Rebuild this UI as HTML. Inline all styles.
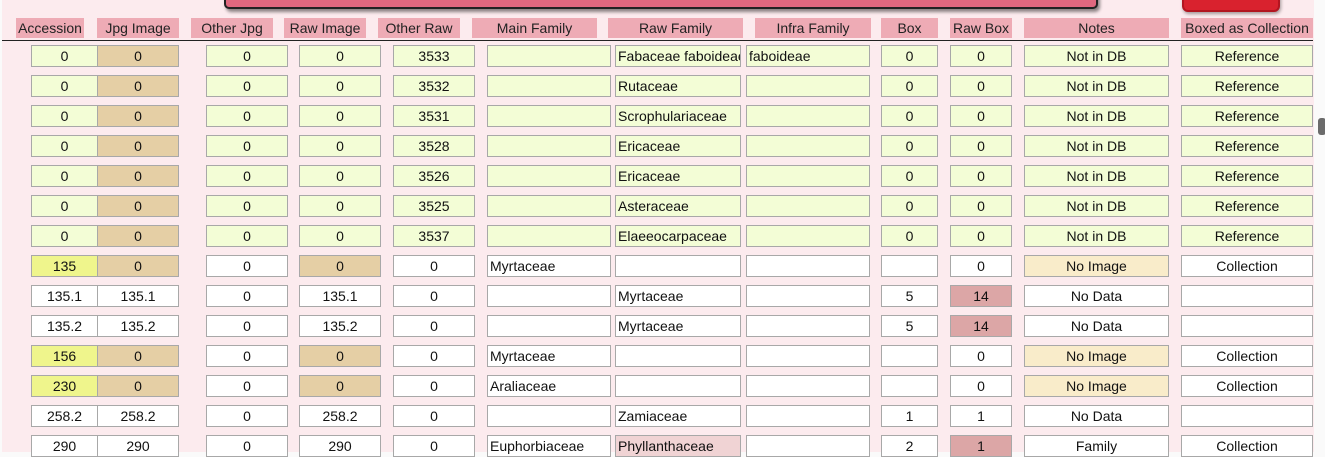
<!DOCTYPE html>
<html><head><meta charset="utf-8"><style>
html,body{margin:0;padding:0;}
body{width:1325px;height:452px;overflow:hidden;background:#fafafa;position:relative;font-family:"Liberation Sans",Arial,sans-serif;font-size:14px;color:#111;}
#bg{position:absolute;left:2px;top:0;width:1312px;height:452px;background:#fcebee;}
.h{position:absolute;top:18px;height:20px;line-height:20px;background:#eeabb5;text-align:center;font-size:14px;color:#222;white-space:nowrap;overflow:hidden;}
.c{position:absolute;height:20px;line-height:20px;border:1px solid #a8a8a8;text-align:center;background:#fff;white-space:nowrap;overflow:hidden;box-sizing:content-box;}
.l{text-align:left;padding-left:2px;}
.g{background:#f3fdd6;}.t{background:#e5cfa5;}.y{background:#eff58c;}.n{background:#f9ecca;}.p{background:#dca6a6;}.q{background:#f0d3d4;}
</style></head><body>
<div id="bg"></div>
<div style="position:absolute;left:224px;top:-12px;width:870px;height:17px;background:#e0687f;border:2px solid #222;border-radius:5px;box-shadow:2px 3px 3px rgba(0,0,0,.45);"></div>
<div style="position:absolute;left:1182px;top:-10px;width:94px;height:18px;background:#d9222e;border:2px solid #b21520;border-radius:6px;box-shadow:1px 2px 3px rgba(0,0,0,.35);"></div>
<div style="position:absolute;left:1318px;top:118px;width:8px;height:17px;background:#6b6b6b;border-radius:3px;"></div>
<div class="h" style="left:16px;width:68px">Accession</div>
<div class="h" style="left:97px;width:82px">Jpg Image</div>
<div class="h" style="left:191px;width:82px">Other Jpg</div>
<div class="h" style="left:284px;width:82px">Raw Image</div>
<div class="h" style="left:378px;width:82px">Other Raw</div>
<div class="h" style="left:472px;width:125px">Main Family</div>
<div class="h" style="left:608px;width:135px">Raw Family</div>
<div class="h" style="left:755px;width:116px">Infra Family</div>
<div class="h" style="left:881px;width:57px">Box</div>
<div class="h" style="left:950px;width:62px">Raw Box</div>
<div class="h" style="left:1024px;width:145px">Notes</div>
<div class="h" style="left:1181px;width:132px">Boxed as Collection</div>
<div style="position:absolute;left:2px;top:40px;width:1311px;height:1px;background:#222"></div>

<div style="position:absolute;left:0;top:45px">
<div class="c g" style="left:31px;width:65px">0</div><div class="c t" style="left:97px;width:80px">0</div><div class="c g" style="left:206px;width:80px">0</div><div class="c g" style="left:299px;width:80px">0</div><div class="c g" style="left:393px;width:80px">3533</div><div class="c g l" style="left:487px;width:120px"></div><div class="c g l" style="left:615px;width:122px">Fabaceae faboideae</div><div class="c g l" style="left:746px;width:120px">faboideae</div><div class="c g" style="left:881px;width:55px">0</div><div class="c g" style="left:950px;width:60px">0</div><div class="c g" style="left:1024px;width:143px">Not in DB</div><div class="c g" style="left:1181px;width:130px">Reference</div>
</div>
<div style="position:absolute;left:0;top:75px">
<div class="c g" style="left:31px;width:65px">0</div><div class="c t" style="left:97px;width:80px">0</div><div class="c g" style="left:206px;width:80px">0</div><div class="c g" style="left:299px;width:80px">0</div><div class="c g" style="left:393px;width:80px">3532</div><div class="c g l" style="left:487px;width:120px"></div><div class="c g l" style="left:615px;width:122px">Rutaceae</div><div class="c g l" style="left:746px;width:120px"></div><div class="c g" style="left:881px;width:55px">0</div><div class="c g" style="left:950px;width:60px">0</div><div class="c g" style="left:1024px;width:143px">Not in DB</div><div class="c g" style="left:1181px;width:130px">Reference</div>
</div>
<div style="position:absolute;left:0;top:105px">
<div class="c g" style="left:31px;width:65px">0</div><div class="c t" style="left:97px;width:80px">0</div><div class="c g" style="left:206px;width:80px">0</div><div class="c g" style="left:299px;width:80px">0</div><div class="c g" style="left:393px;width:80px">3531</div><div class="c g l" style="left:487px;width:120px"></div><div class="c g l" style="left:615px;width:122px">Scrophulariaceae</div><div class="c g l" style="left:746px;width:120px"></div><div class="c g" style="left:881px;width:55px">0</div><div class="c g" style="left:950px;width:60px">0</div><div class="c g" style="left:1024px;width:143px">Not in DB</div><div class="c g" style="left:1181px;width:130px">Reference</div>
</div>
<div style="position:absolute;left:0;top:135px">
<div class="c g" style="left:31px;width:65px">0</div><div class="c t" style="left:97px;width:80px">0</div><div class="c g" style="left:206px;width:80px">0</div><div class="c g" style="left:299px;width:80px">0</div><div class="c g" style="left:393px;width:80px">3528</div><div class="c g l" style="left:487px;width:120px"></div><div class="c g l" style="left:615px;width:122px">Ericaceae</div><div class="c g l" style="left:746px;width:120px"></div><div class="c g" style="left:881px;width:55px">0</div><div class="c g" style="left:950px;width:60px">0</div><div class="c g" style="left:1024px;width:143px">Not in DB</div><div class="c g" style="left:1181px;width:130px">Reference</div>
</div>
<div style="position:absolute;left:0;top:165px">
<div class="c g" style="left:31px;width:65px">0</div><div class="c t" style="left:97px;width:80px">0</div><div class="c g" style="left:206px;width:80px">0</div><div class="c g" style="left:299px;width:80px">0</div><div class="c g" style="left:393px;width:80px">3526</div><div class="c g l" style="left:487px;width:120px"></div><div class="c g l" style="left:615px;width:122px">Ericaceae</div><div class="c g l" style="left:746px;width:120px"></div><div class="c g" style="left:881px;width:55px">0</div><div class="c g" style="left:950px;width:60px">0</div><div class="c g" style="left:1024px;width:143px">Not in DB</div><div class="c g" style="left:1181px;width:130px">Reference</div>
</div>
<div style="position:absolute;left:0;top:195px">
<div class="c g" style="left:31px;width:65px">0</div><div class="c t" style="left:97px;width:80px">0</div><div class="c g" style="left:206px;width:80px">0</div><div class="c g" style="left:299px;width:80px">0</div><div class="c g" style="left:393px;width:80px">3525</div><div class="c g l" style="left:487px;width:120px"></div><div class="c g l" style="left:615px;width:122px">Asteraceae</div><div class="c g l" style="left:746px;width:120px"></div><div class="c g" style="left:881px;width:55px">0</div><div class="c g" style="left:950px;width:60px">0</div><div class="c g" style="left:1024px;width:143px">Not in DB</div><div class="c g" style="left:1181px;width:130px">Reference</div>
</div>
<div style="position:absolute;left:0;top:225px">
<div class="c g" style="left:31px;width:65px">0</div><div class="c t" style="left:97px;width:80px">0</div><div class="c g" style="left:206px;width:80px">0</div><div class="c g" style="left:299px;width:80px">0</div><div class="c g" style="left:393px;width:80px">3537</div><div class="c g l" style="left:487px;width:120px"></div><div class="c g l" style="left:615px;width:122px">Elaeeocarpaceae</div><div class="c g l" style="left:746px;width:120px"></div><div class="c g" style="left:881px;width:55px">0</div><div class="c g" style="left:950px;width:60px">0</div><div class="c g" style="left:1024px;width:143px">Not in DB</div><div class="c g" style="left:1181px;width:130px">Reference</div>
</div>
<div style="position:absolute;left:0;top:255px">
<div class="c y" style="left:31px;width:65px">135</div><div class="c t" style="left:97px;width:80px">0</div><div class="c" style="left:206px;width:80px">0</div><div class="c t" style="left:299px;width:80px">0</div><div class="c" style="left:393px;width:80px">0</div><div class="c l" style="left:487px;width:120px">Myrtaceae</div><div class="c l" style="left:615px;width:122px"></div><div class="c l" style="left:746px;width:120px"></div><div class="c" style="left:881px;width:55px"></div><div class="c" style="left:950px;width:60px">0</div><div class="c n" style="left:1024px;width:143px">No Image</div><div class="c" style="left:1181px;width:130px">Collection</div>
</div>
<div style="position:absolute;left:0;top:285px">
<div class="c" style="left:31px;width:65px">135.1</div><div class="c" style="left:97px;width:80px">135.1</div><div class="c" style="left:206px;width:80px">0</div><div class="c" style="left:299px;width:80px">135.1</div><div class="c" style="left:393px;width:80px">0</div><div class="c l" style="left:487px;width:120px"></div><div class="c l" style="left:615px;width:122px">Myrtaceae</div><div class="c l" style="left:746px;width:120px"></div><div class="c" style="left:881px;width:55px">5</div><div class="c p" style="left:950px;width:60px">14</div><div class="c" style="left:1024px;width:143px">No Data</div><div class="c" style="left:1181px;width:130px"></div>
</div>
<div style="position:absolute;left:0;top:315px">
<div class="c" style="left:31px;width:65px">135.2</div><div class="c" style="left:97px;width:80px">135.2</div><div class="c" style="left:206px;width:80px">0</div><div class="c" style="left:299px;width:80px">135.2</div><div class="c" style="left:393px;width:80px">0</div><div class="c l" style="left:487px;width:120px"></div><div class="c l" style="left:615px;width:122px">Myrtaceae</div><div class="c l" style="left:746px;width:120px"></div><div class="c" style="left:881px;width:55px">5</div><div class="c p" style="left:950px;width:60px">14</div><div class="c" style="left:1024px;width:143px">No Data</div><div class="c" style="left:1181px;width:130px"></div>
</div>
<div style="position:absolute;left:0;top:345px">
<div class="c y" style="left:31px;width:65px">156</div><div class="c t" style="left:97px;width:80px">0</div><div class="c" style="left:206px;width:80px">0</div><div class="c t" style="left:299px;width:80px">0</div><div class="c" style="left:393px;width:80px">0</div><div class="c l" style="left:487px;width:120px">Myrtaceae</div><div class="c l" style="left:615px;width:122px"></div><div class="c l" style="left:746px;width:120px"></div><div class="c" style="left:881px;width:55px"></div><div class="c" style="left:950px;width:60px">0</div><div class="c n" style="left:1024px;width:143px">No Image</div><div class="c" style="left:1181px;width:130px">Collection</div>
</div>
<div style="position:absolute;left:0;top:375px">
<div class="c y" style="left:31px;width:65px">230</div><div class="c t" style="left:97px;width:80px">0</div><div class="c" style="left:206px;width:80px">0</div><div class="c t" style="left:299px;width:80px">0</div><div class="c" style="left:393px;width:80px">0</div><div class="c l" style="left:487px;width:120px">Araliaceae</div><div class="c l" style="left:615px;width:122px"></div><div class="c l" style="left:746px;width:120px"></div><div class="c" style="left:881px;width:55px"></div><div class="c" style="left:950px;width:60px">0</div><div class="c n" style="left:1024px;width:143px">No Image</div><div class="c" style="left:1181px;width:130px">Collection</div>
</div>
<div style="position:absolute;left:0;top:405px">
<div class="c" style="left:31px;width:65px">258.2</div><div class="c" style="left:97px;width:80px">258.2</div><div class="c" style="left:206px;width:80px">0</div><div class="c" style="left:299px;width:80px">258.2</div><div class="c" style="left:393px;width:80px">0</div><div class="c l" style="left:487px;width:120px"></div><div class="c l" style="left:615px;width:122px">Zamiaceae</div><div class="c l" style="left:746px;width:120px"></div><div class="c" style="left:881px;width:55px">1</div><div class="c" style="left:950px;width:60px">1</div><div class="c" style="left:1024px;width:143px">No Data</div><div class="c" style="left:1181px;width:130px"></div>
</div>
<div style="position:absolute;left:0;top:435px">
<div class="c" style="left:31px;width:65px">290</div><div class="c" style="left:97px;width:80px">290</div><div class="c" style="left:206px;width:80px">0</div><div class="c" style="left:299px;width:80px">290</div><div class="c" style="left:393px;width:80px">0</div><div class="c l" style="left:487px;width:120px">Euphorbiaceae</div><div class="c l q" style="left:615px;width:122px">Phyllanthaceae</div><div class="c l" style="left:746px;width:120px"></div><div class="c" style="left:881px;width:55px">2</div><div class="c p" style="left:950px;width:60px">1</div><div class="c" style="left:1024px;width:143px">Family</div><div class="c" style="left:1181px;width:130px">Collection</div>
</div>
</body></html>
